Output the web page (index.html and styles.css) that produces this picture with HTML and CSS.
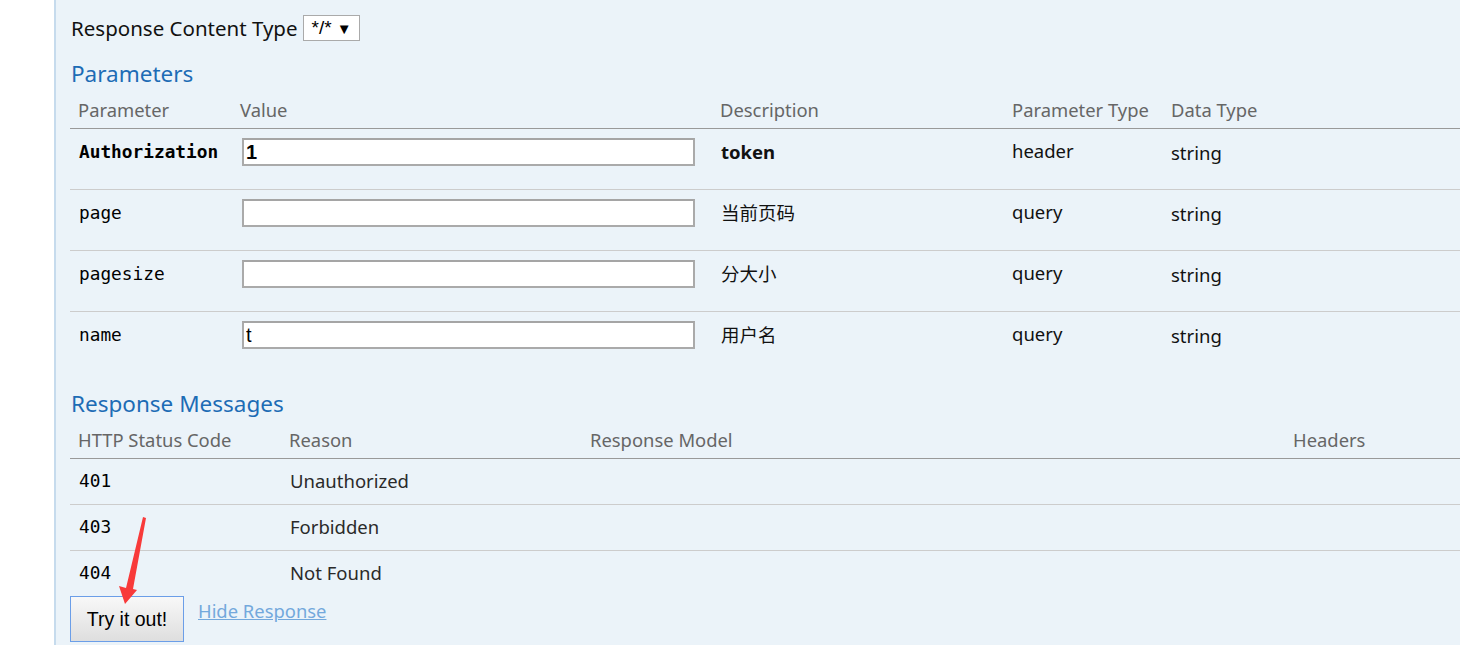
FILE: index.html
```html
<!DOCTYPE html>
<html>
<head>
<meta charset="utf-8">
<link rel="stylesheet" href="styles.css">
</head>
<body>
<div class="panel">
  <div class="content-type">
    <span class="ct-label">Response Content Type</span>
    <div class="fake-select"><span>*/*</span><span class="caret">▼</span></div>
  </div>

  <h4 class="section-title">Parameters</h4>
  <table class="grid params">
    <colgroup>
      <col class="c-p1"><col class="c-p2"><col class="c-p3"><col class="c-p4"><col>
    </colgroup>
    <thead>
      <tr><th>Parameter</th><th>Value</th><th>Description</th><th>Parameter Type</th><th>Data Type</th></tr>
    </thead>
    <tbody>
      <tr>
        <td class="code bold">Authorization</td>
        <td><input class="field bold-input" type="text" value="1"></td>
        <td class="strong">token</td>
        <td class="ptype">header</td>
        <td class="dtype">string</td>
      </tr>
      <tr>
        <td class="code">page</td>
        <td><input class="field" type="text" value=""></td>
        <td>当前页码</td>
        <td class="ptype">query</td>
        <td class="dtype">string</td>
      </tr>
      <tr>
        <td class="code">pagesize</td>
        <td><input class="field" type="text" value=""></td>
        <td>分大小</td>
        <td class="ptype">query</td>
        <td class="dtype">string</td>
      </tr>
      <tr>
        <td class="code">name</td>
        <td><input class="field" type="text" value="t"></td>
        <td>用户名</td>
        <td class="ptype">query</td>
        <td class="dtype">string</td>
      </tr>
    </tbody>
  </table>

  <h4 class="section-title resp-title">Response Messages</h4>
  <table class="grid responses">
    <colgroup>
      <col class="c-r1"><col class="c-r2"><col class="c-r3"><col>
    </colgroup>
    <thead>
      <tr><th>HTTP Status Code</th><th>Reason</th><th>Response Model</th><th>Headers</th></tr>
    </thead>
    <tbody>
      <tr><td class="code">401</td><td>Unauthorized</td><td></td><td></td></tr>
      <tr><td class="code">403</td><td>Forbidden</td><td></td><td></td></tr>
      <tr><td class="code">404</td><td>Not Found</td><td></td><td></td></tr>
    </tbody>
  </table>

  <div class="actions">
    <button class="try-btn" type="button">Try it out!</button>
    <a class="hide-link" href="#">Hide Response</a>
  </div>
</div>

<svg class="annot-arrow" width="1460" height="645" viewBox="0 0 1460 645">
  <polygon points="143,517 146,518 133,589 137,590 125,604 119,586 126,588" fill="#f83a3a"/>
</svg>
</body>
</html>
```

FILE: styles.css
```css
html, body {
  margin: 0;
  padding: 0;
  background: #ffffff;
  overflow: hidden;
  width: 1460px;
  height: 645px;
}

body {
  font-family: "Noto Sans", "Open Sans", "Noto Sans CJK SC", sans-serif;
  font-size: 18.5px;
  color: #222;
}

.panel {
  margin-left: 54px;
  border-left: 2px solid #c6dbed;
  background: #ebf3f9;
  height: 645px;
  padding: 15px 0 0 14px;
  box-sizing: border-box;
}

.content-type {
  display: flex;
  align-items: center;
  height: 26px;
}

.ct-label {
  font-size: 20.5px;
  color: #111;
  margin-right: 5px;
  margin-left: 1px;
}

.fake-select {
  box-sizing: border-box;
  width: 57px;
  height: 26px;
  background: #fff;
  border: 1px solid #aaa;
  display: flex;
  align-items: center;
  justify-content: space-between;
  padding: 0 7px 0 8px;
  font-family: "Liberation Sans", Arial, sans-serif;
  font-size: 19px;
  color: #000;
}

.fake-select .caret {
  font-size: 15px;
}

.section-title {
  margin: 18px 0 0 1px;
  font-size: 22.5px;
  line-height: 30px;
  font-weight: normal;
  color: #1d6cb5;
}

.resp-title {
  margin-top: 17px;
}

.grid {
  border-collapse: collapse;
  table-layout: fixed;
  width: 1390px;
}

.grid th {
  text-align: left;
  font-weight: normal;
  color: #666;
  font-size: 18.4px;
  line-height: 24px;
  padding: 9px 8px 6px 8px;
  border-bottom: 1px solid #999;
  white-space: nowrap;
}

.c-p1 { width: 162px; }
.c-p2 { width: 480px; }
.c-p3 { width: 292px; }
.c-p4 { width: 159px; }

.c-r1 { width: 211px; }
.c-r2 { width: 301px; }
.c-r3 { width: 703px; }

.params td {
  vertical-align: top;
  padding: 9px 8px 23px 8px;
  line-height: 28px;
  height: 28px;
  border-bottom: 1px solid #ccc;
  color: #111;
}

.params tbody tr:last-child td,
.responses tbody tr:last-child td {
  border-bottom: none;
}

.params td.ptype {
  padding-top: 8px;
  padding-bottom: 24px;
}

.params td.dtype {
  padding-top: 10px;
  padding-bottom: 22px;
}

.params td:nth-child(2) {
  padding-left: 10px;
}

.params td:nth-child(3) {
  padding-left: 9px;
}

.responses td {
  padding: 10px 8px 11px 8px;
  line-height: 24px;
  height: 24px;
  border-bottom: 1px solid #ccc;
  color: #2a2a2a;
}

.responses td:nth-child(2) {
  padding-left: 9px;
}

.grid td.code {
  padding-left: 9px;
  font-family: "DejaVu Sans Mono", "Liberation Mono", monospace;
  font-size: 17.8px;
  color: #000;
}

.code.bold {
  font-weight: bold;
}

.strong {
  font-weight: bold;
  color: #222;
}

.field {
  display: block;
  box-sizing: border-box;
  width: 453px;
  height: 28px;
  margin: 0;
  padding: 0 2px;
  border: 2px solid #aaa;
  border-top-color: #a5a5a5;
  background: #fff;
  font-family: "Liberation Sans", Arial, sans-serif;
  font-size: 20px;
  color: #000;
  outline: none;
}

.bold-input {
  font-weight: bold;
}

.actions {
  display: flex;
  align-items: flex-start;
}

.try-btn {
  box-sizing: border-box;
  width: 114px;
  height: 46px;
  margin: 0;
  padding: 0;
  border: 1px solid #6b9ee8;
  background: linear-gradient(#f8f8f8, #dedede);
  font-family: "Liberation Sans", Arial, sans-serif;
  font-size: 19.5px;
  color: #000;
}

.hide-link {
  margin-left: 14px;
  margin-top: 1px;
  font-size: 18.4px;
  line-height: 28px;
  color: #73a8dc;
  text-decoration: underline;
}

.annot-arrow {
  position: absolute;
  left: 0;
  top: 0;
  pointer-events: none;
}
```
